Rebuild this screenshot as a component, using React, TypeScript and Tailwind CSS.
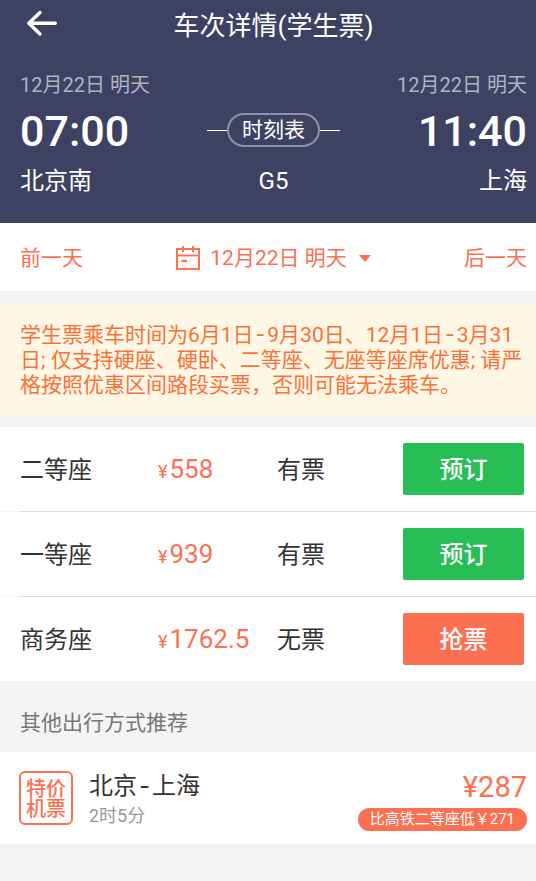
import { useState } from "react";

const seats = [
  { name: "二等座", price: "558", status: "有票", available: true },
  { name: "一等座", price: "939", status: "有票", available: true },
  { name: "商务座", price: "1762.5", status: "无票", available: false },
];

// wide dash used between dates and cities
function Dash() {
  return <span className="inline-block px-0.5 font-['Inter'] leading-none">-</span>;
}

function BackIcon() {
  return (
    <svg width="32" height="28" viewBox="0 0 32 28" fill="none" stroke="currentColor" strokeWidth="3.4" strokeLinecap="round" strokeLinejoin="round">
      <path d="M29.3 14.3H3M14 3.6L2.8 14.3L14 25" />
    </svg>
  );
}

function CalendarIcon() {
  return (
    <svg width="24" height="24" viewBox="0 0 24 24" fill="none" stroke="currentColor" strokeWidth="2">
      <path d="M1 3H23V23H1Z" />
      <path d="M1 9.5H23" strokeWidth="1.8" />
      <path d="M7 0V6M17 0V6" />
      <path d="M5.5 15H11" strokeWidth="2.4" />
    </svg>
  );
}

export default function App() {
  const [date] = useState("12月22日 明天");

  return (
    <div className="min-h-screen bg-[#f4f4f4] text-[#333] font-['Roboto','Noto_Sans_CJK_SC',sans-serif]">
      <header className="bg-[#3d4263] text-white pl-5 pr-[9px] pb-[26px]">
        <div className="grid grid-cols-[1fr_auto_1fr] items-center h-[52px]">
          <button aria-label="返回" className="justify-self-start pl-1.5 pb-1.5">
            <BackIcon />
          </button>
          <h1 className="text-[26px] leading-8">车次详情(学生票)</h1>
        </div>
        <div className="flex justify-between mt-[21px] text-xl leading-6 text-[#b1b3c1]">
          <span>{date}</span>
          <span>{date}</span>
        </div>
        <div className="grid grid-cols-[1fr_auto_1fr] items-center mt-2.5 text-[43px] leading-[44px] font-medium">
          <span className="pt-0.5">07:00</span>
          <div className="flex items-center">
            <span className="w-5 h-px bg-white"></span>
            <button className="h-[34px] px-[13px] rounded-full border-2 border-[#9092a6] text-[21px] leading-7 font-normal">
              时刻表
            </button>
            <span className="w-5 h-px bg-white"></span>
          </div>
          <span className="pt-0.5 text-right">11:40</span>
        </div>
        <div className="grid grid-cols-[1fr_auto_1fr] items-center mt-3 text-2xl leading-8">
          <span>北京南</span>
          <span>G5</span>
          <span className="text-right">上海</span>
        </div>
      </header>

      <nav className="flex items-center justify-between h-[68px] pl-5 pr-[9px] pt-0.5 bg-white text-[21px] leading-7 text-[#fd6f51]">
        <button>前一天</button>
        <button className="flex items-center">
          <CalendarIcon />
          <span className="ml-2.5">{date}</span>
          <svg className="ml-3" width="12" height="7" viewBox="0 0 12 7" fill="currentColor">
            <path d="M0 0H12L6 7Z" />
          </svg>
        </button>
        <button>后一天</button>
      </nav>

      <p className="my-3 pl-5 pr-2.5 pt-5 pb-[17px] bg-[#fff7e6] text-[21px] leading-[25px] text-[#fa7035]">
        学生票乘车时间为6月1日<Dash />9月30日、12月1日<Dash />3月31日; 仅支持硬座、硬卧、二等座、无座等座席优惠; 请严格按照优惠区间路段买票，否则可能无法乘车。
      </p>

      <ul className="bg-white">
        {seats.map((seat, i) => (
          <li key={seat.name}>
            {i > 0 && (
              <div className="pl-5 bg-[#f7f7f7]">
                <div className="h-px bg-[#dedede]"></div>
              </div>
            )}
            <div className="grid grid-cols-[138fr_119fr_126fr_121fr] items-center py-4 pl-5 pr-3 text-2xl leading-8">
              <span className="pt-0.5">{seat.name}</span>
              <span className="text-[26px] text-[#fd6f51]">
                <span className="mr-0.5 text-lg">¥</span>
                {seat.price}
              </span>
              <span className="pt-0.5">{seat.status}</span>
              <button
                className={
                  seat.available
                    ? "h-[52px] pt-0.5 rounded-xs bg-[#27be55] text-white font-medium"
                    : "h-[52px] pt-0.5 rounded-xs bg-[#fd6f51] text-white font-medium"
                }
              >
                {seat.available ? "预订" : "抢票"}
              </button>
            </div>
          </li>
        ))}
      </ul>

      <h2 className="pl-5 pt-7 pb-[15px] text-[21px] leading-7 text-[#777]">其他出行方式推荐</h2>

      <a href="#" className="flex items-center h-[92px] pl-[19px] pr-[9px] bg-white">
        <div className="flex items-center justify-center size-[54px] pt-0.5 rounded-md border-2 border-[#fd6f51] text-xl leading-5 font-medium text-[#fd6f51] text-center">
          <span>
            特价
            <br />
            机票
          </span>
        </div>
        <div className="ml-4 pt-1">
          <div className="text-2xl leading-8">北京<Dash />上海</div>
          <div className="text-lg leading-7 text-[#999]">2时5分</div>
        </div>
        <div className="flex flex-col items-end ml-auto text-[#fd6f51]">
          <span className="text-[29px] leading-[42px]">¥287</span>
          <span className="px-3 rounded-full bg-[#fd6f51] text-[15px] leading-[23px] text-white">比高铁二等座低￥271</span>
        </div>
      </a>
    </div>
  );
}
